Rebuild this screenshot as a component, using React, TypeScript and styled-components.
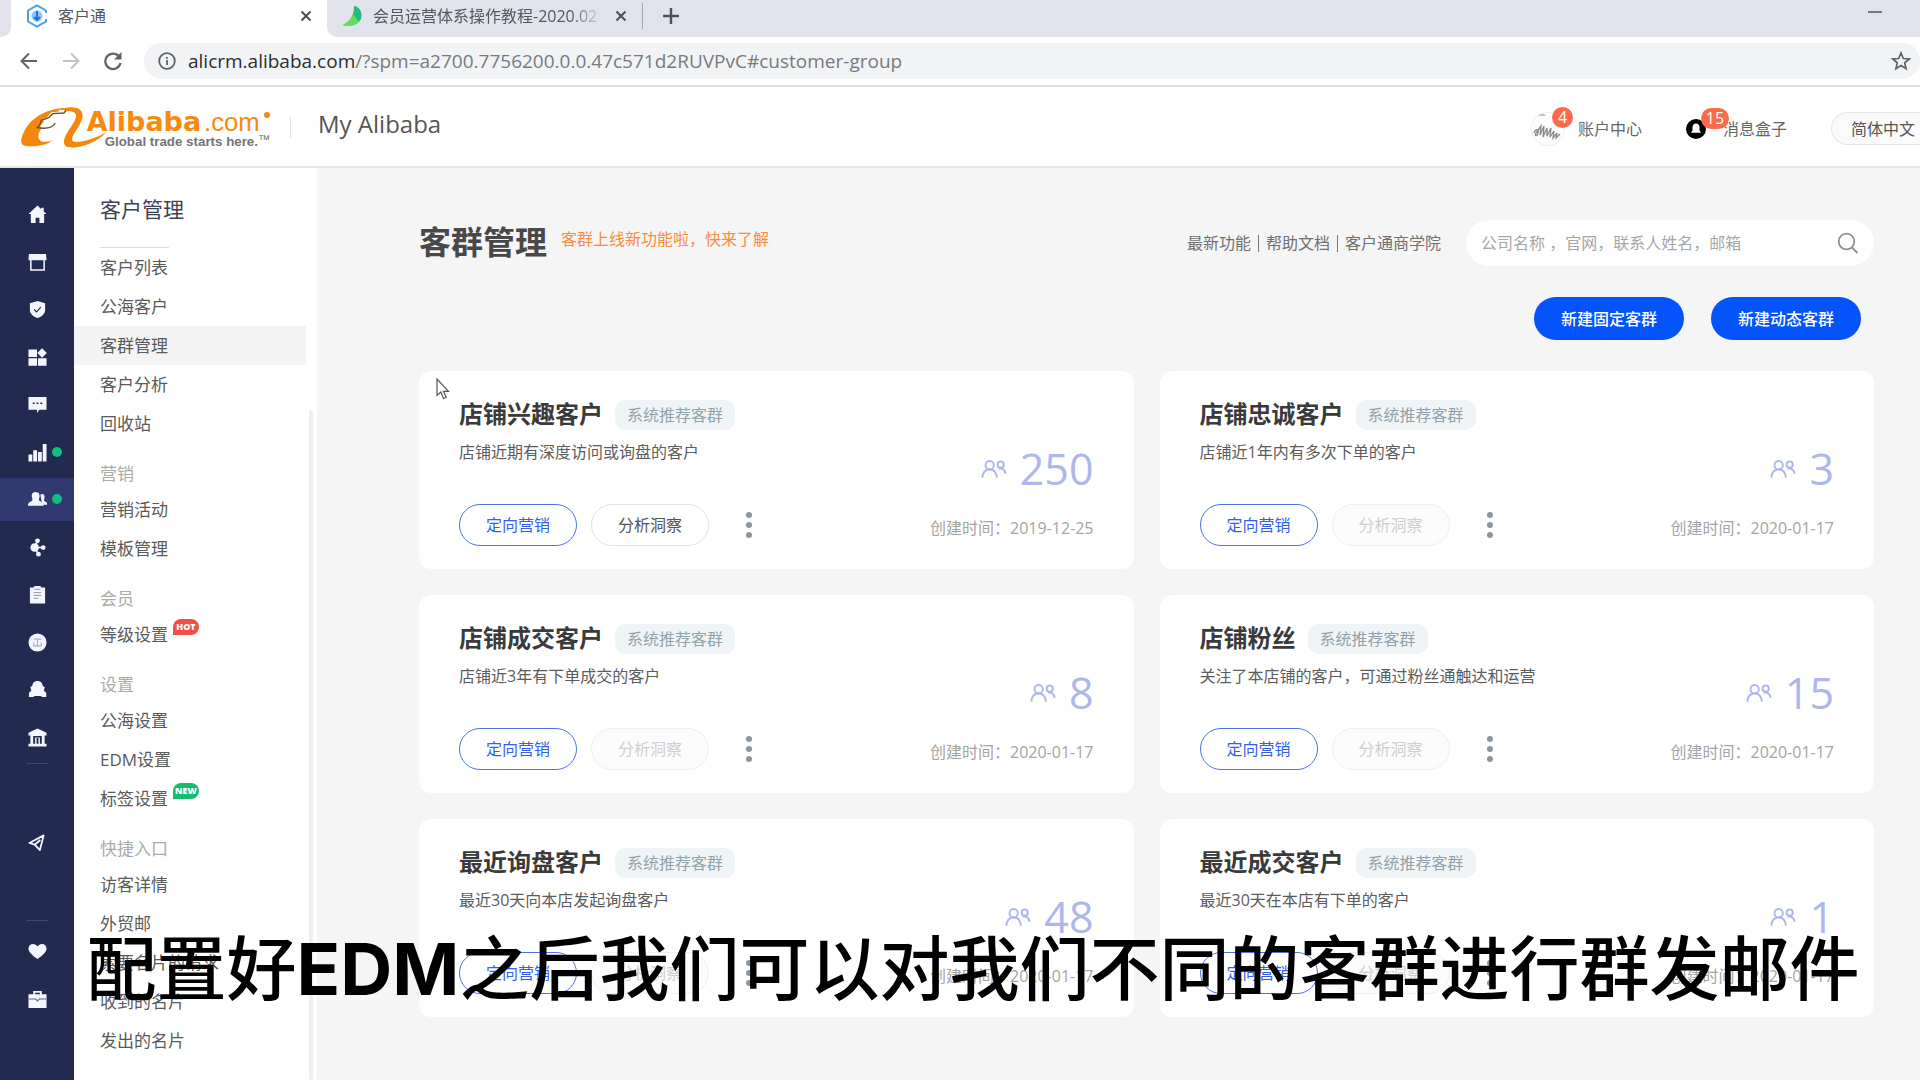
import React from "react";
import styled, { createGlobalStyle, css } from "styled-components";

const GlobalStyle = createGlobalStyle`
  *, *::before, *::after { box-sizing: border-box; }
  body {
    margin: 0;
    overflow: hidden;
    background: #f5f5f5;
    color: #555;
    font-family: "Open Sans", "Noto Sans CJK SC", sans-serif;
    font-size: 16px;
    line-height: 24px;
  }
  button, input, select { font: inherit; color: inherit; padding: 0; }
  button { cursor: pointer; }
  a { color: inherit; text-decoration: none; }
  svg { display: block; flex: none; }
  h1, h2, p, ul { margin: 0; padding: 0; }
  ul { list-style: none; }
`;

const Page = styled.div`
  display: flex;
  flex-direction: column;
  min-height: 100vh;
`;

/* ---------- browser ---------- */

const TabStrip = styled.div`
  display: flex;
  height: 37px;
  background: #fff;
`;

const PreviousTab = styled.div`
  flex: 0 0 11px;
  background: #e1e2eb;
  border-radius: 0 0 10px 0;
`;

const Tab = styled.div<{ $width: number; $gap: number }>`
  display: flex;
  align-items: center;
  gap: ${(p) => p.$gap}px;
  width: ${(p) => p.$width}px;
  padding: 0 12px 5px 14px;
`;

const InactiveTabs = styled.div`
  flex: 1;
  display: flex;
  align-items: center;
  background: #e1e2eb;
  border-radius: 0 0 0 10px;
`;

const TabTitle = styled.span<{ $fade?: boolean }>`
  flex: 1;
  min-width: 0;
  overflow: hidden;
  white-space: nowrap;
  color: #55575c;
  ${(p) =>
    p.$fade &&
    css`
      mask-image: linear-gradient(to right, #000 86%, transparent);
    `}
`;

const IconButton = styled.button`
  display: flex;
  align-items: center;
  justify-content: center;
  flex: none;
  width: 18px;
  height: 24px;
  border: 0;
  background: none;
`;

const TabDivider = styled.i`
  width: 1px;
  height: 26px;
  margin: 0 19px 5px 0;
  background: #a5a8b0;
`;

const NewTab = styled(IconButton)`
  margin-bottom: 5px;
`;

const Minimize = styled(IconButton)`
  margin: 0 36px 13px auto;
`;

const Toolbar = styled.div`
  display: flex;
  align-items: center;
  gap: 24px;
  height: 50px;
  padding-left: 20px;
  background: #fff;
  border-bottom: 2px solid #dcdee1;
`;

const AddressBar = styled.div`
  flex: 1;
  display: flex;
  align-items: center;
  gap: 12px;
  height: 36px;
  margin-left: -2px;
  padding: 0 10px 0 14px;
  border-radius: 18px;
  background: #f2f3f5;
`;

const Url = styled.span`
  flex: 1;
  font-size: 19px;
  color: #777a7f;
  b { font-weight: 400; color: #2b2d31; }
`;

/* ---------- site header ---------- */

const Header = styled.header`
  display: flex;
  align-items: center;
  height: 81px;
  padding-left: 20px;
  background: #fff;
  border-bottom: 2px solid #e2e5e9;
`;

const Brand = styled.a`
  display: flex;
  align-items: center;
`;

const HeaderDivider = styled.i`
  width: 1px;
  height: 22px;
  margin: 0 27px 0 17px;
  background: #e2e2e2;
`;

const SiteName = styled.span`
  font-size: 24px;
  line-height: 32px;
  margin-bottom: 6px;
  color: #555;
`;

const HeaderActions = styled.div`
  display: flex;
  align-items: center;
  gap: 44px;
  margin-left: auto;
  padding-top: 4px;
`;

const HeaderLink = styled.a<{ $gap: number }>`
  display: flex;
  align-items: center;
  gap: ${(p) => p.$gap}px;
  color: #666;
`;

const BadgeHolder = styled.span`
  position: relative;
  display: flex;
`;

const CountBadge = styled.b<{ $left: number; $top: number; $width: number }>`
  position: absolute;
  left: ${(p) => p.$left}px;
  top: ${(p) => p.$top}px;
  width: ${(p) => p.$width}px;
  height: 21px;
  border-radius: 11px;
  background: #fb6b4b;
  color: #fff;
  font-size: 16px;
  font-weight: 400;
  line-height: 21px;
  text-align: center;
`;

const Language = styled.select`
  appearance: none;
  width: 89px;
  height: 33px;
  padding-left: 19px;
  border: 1px solid #e4e4e4;
  border-right: 0;
  border-radius: 17px 0 0 17px;
  background: #fafafa;
  color: #555;
`;

/* ---------- navigation ---------- */

const Body = styled.div`
  flex: 1;
  display: flex;
  align-items: stretch;
`;

const Rail = styled.nav`
  flex: 0 0 74px;
  display: flex;
  flex-direction: column;
  align-items: center;
  padding-top: 25px;
  background: #222a50;
  color: #f4f6ff;
`;

const RailList = styled.ul`
  display: flex;
  flex-direction: column;
  justify-content: space-between;
  width: 100%;
  height: 566px;
`;

const RailLink = styled.a<{ $active?: boolean }>`
  position: relative;
  display: flex;
  align-items: center;
  justify-content: center;
  width: 100%;
  height: 43px;
  background: ${(p) => (p.$active ? "#303970" : "transparent")};
`;

const GreenDot = styled.i`
  position: absolute;
  right: 12px;
  top: 16px;
  width: 10px;
  height: 10px;
  border-radius: 50%;
  background: #10bf7c;
`;

const RailDivider = styled.i<{ $top: number; $bottom: number }>`
  width: 22px;
  height: 1px;
  margin: ${(p) => p.$top}px 0 ${(p) => p.$bottom}px;
  background: #3e4775;
`;

const RailGroup = styled.div`
  display: flex;
  flex-direction: column;
  gap: 5px;
  width: 100%;
`;

const SubMenu = styled.nav`
  flex: 0 0 243px;
  display: flex;
  gap: 3px;
  background: #fff;
`;

const SubMenuContent = styled.div`
  flex: 0 0 232px;
  padding: 23px 0 20px;
`;

const SubMenuTitle = styled.h2`
  padding-left: 26px;
  font-size: 21px;
  font-weight: 400;
  line-height: 36px;
  color: #3d3f52;
`;

const SubMenuRule = styled.div`
  width: 69px;
  height: 1px;
  margin: 20px 0 0 26px;
  background: #dcdcdc;
`;

const GroupLabel = styled.p`
  margin-top: 14px;
  padding-left: 26px;
  font-size: 17px;
  line-height: 33px;
  color: #aaa;
`;

const MenuLink = styled.a<{ $active?: boolean }>`
  display: flex;
  align-items: center;
  gap: 5px;
  height: 39px;
  padding-left: 26px;
  font-size: 17px;
  color: #5a5a5a;
  background: ${(p) => (p.$active ? "#f4f4f5" : "transparent")};
`;

const Flag = styled.em<{ $color: string }>`
  align-self: flex-start;
  margin-top: 4px;
  width: 26px;
  height: 16px;
  border-radius: 8px 8px 8px 0;
  background: ${(p) => p.$color};
  color: #fff;
  font-size: 9px;
  font-style: normal;
  font-weight: 800;
  line-height: 15px;
  text-align: center;
`;

const ScrollThumb = styled.div`
  width: 4px;
  margin-top: 242px;
  border-radius: 2px;
  background: #efefef;
`;

/* ---------- main ---------- */

const Main = styled.main`
  flex: 1;
  min-width: 0;
  padding: 52px 46px 20px 102px;
`;

const PageHead = styled.div`
  display: flex;
  align-items: center;
  height: 46px;
`;

const PageTitle = styled.h1`
  padding-bottom: 2px;
  font-size: 32px;
  font-weight: 700;
  line-height: 44px;
  color: #484848;
`;

const NewsLink = styled.a`
  margin-left: 14px;
  padding-bottom: 8px;
  color: #ff8a3c;
`;

const HelpLinks = styled.div`
  display: flex;
  align-items: center;
  margin-left: auto;
  color: #707070;
  a + a { margin-left: 7px; padding-left: 8px; background: linear-gradient(#777, #777) left center / 1px 17px no-repeat; }
`;

const SearchBox = styled.label`
  display: flex;
  align-items: center;
  width: 408px;
  height: 46px;
  margin-left: 25px;
  padding: 0 15px;
  border-radius: 23px;
  background: #fff;
  color: #909090;
`;

const SearchInput = styled.input`
  flex: 1;
  min-width: 0;
  border: 0;
  outline: 0;
  background: none;
  &::placeholder { color: #a6a6a6; opacity: 1; }
`;

const CreateRow = styled.div`
  display: flex;
  justify-content: flex-end;
  gap: 27px;
  margin: 31px 0;
  padding-right: 13px;
`;

const CreateButton = styled.button`
  width: 150px;
  height: 43px;
  border: 0;
  border-radius: 22px;
  background: #0453fb;
  color: #fff;
  font-weight: 500;
`;

const CardGrid = styled.div`
  display: grid;
  grid-template-columns: 1fr 1fr;
  gap: 26px;
`;

const Card = styled.article`
  display: flex;
  justify-content: space-between;
  padding: 25px 40px 23px;
  border-radius: 12px;
  background: #fff;
`;

const CardTitleRow = styled.div`
  display: flex;
  align-items: center;
  gap: 12px;
  height: 36px;
`;

const CardTitle = styled.h2`
  font-size: 24px;
  font-weight: 700;
  line-height: 36px;
  color: #3a3a3a;
`;

const Tag = styled.span`
  height: 30px;
  margin-top: 2px;
  padding: 0 12px;
  border-radius: 10px;
  background: #eff5f7;
  color: #94a2a8;
  line-height: 30px;
`;

const Description = styled.p`
  margin-top: 8px;
  color: #5c5c5c;
`;

const Actions = styled.div`
  display: flex;
  gap: 14px;
  margin-top: 40px;
`;

const PillButton = styled.button<{ $primary?: boolean }>`
  width: 118px;
  height: 42px;
  border: 1px solid ${(p) => (p.$primary ? "#4e73e0" : "#e2e2e2")};
  border-radius: 21px;
  background: #fff;
  color: ${(p) => (p.$primary ? "#3460ee" : "#555")};
  &:disabled {
    border-color: #efefef;
    background: #fcfcfc;
    color: #cfcfcf;
  }
`;

const MoreButton = styled(IconButton)`
  width: 52px;
  height: 42px;
  color: #8b96a3;
`;

const Stats = styled.div`
  display: flex;
  flex-direction: column;
  align-items: flex-end;
  justify-content: flex-end;
  gap: 25px;
  padding-bottom: 6px;
`;

const Count = styled.div`
  display: flex;
  align-items: center;
  gap: 13px;
  height: 44px;
  font-size: 43px;
  line-height: 44px;
  color: #afb6ee;
`;

const Created = styled.time`
  color: #a5a5a5;
`;

/* ---------- overlays ---------- */

const Pointer = styled.div`
  position: fixed;
  left: 436px;
  top: 378px;
`;

const Caption = styled.div`
  position: fixed;
  left: 0;
  right: 0;
  bottom: 65px;
  padding-left: 26px;
  color: #000;
  font-family: "Noto Sans CJK SC", sans-serif;
  font-size: 70px;
  font-weight: 500;
  line-height: 100px;
  text-align: center;
  white-space: nowrap;
  pointer-events: none;
  b { font-family: Inter, sans-serif; font-size: 72px; font-weight: 700; line-height: 72px; }
`;

/* ---------- icons ---------- */

type RailIconName = "home" | "store" | "shield" | "apps" | "chat" | "bars" | "people" | "hub" | "clip" | "coin" | "agent" | "bank" | "send" | "heart" | "case";

const railShapes: Record<RailIconName, React.ReactNode> = {
  home: <path d="M10 0.500 0.500 9.500h2.500V19h5v-5.500h4V19h5V9.500h2.500L16.500 6.600V3h-2.500v1.500z" />,
  store: <><path d="M1 1h18l.5 6.500H.5z" /><path d="M3 7v10.800h14V7" fill="none" stroke="currentColor" strokeWidth="1.600" /></>,
  shield: <><path d="M10 1 2 3.500v7c0 4 3.500 7 8 8.500 4.500-1.500 8-4.500 8-8.500v-7z" /><path d="m6.500 10 2.500 2.500 4.500-5" fill="none" stroke="#222a50" strokeWidth="1.200" /></>,
  apps: <><path d="M.5 1.500h9v8h-9zM.5 10.700h9v8h-9zM10.500 10.700h9v8h-9z" /><path d="m14.800 0.300 5 5-5 5-5-5z" /></>,
  chat: <><path d="M.5 2h19v13.500H12L9.500 19v-3.500h-9z" /><path d="M5 8h2v1.500H5zM9 8h2v1.500H9zM13 8h2v1.500h-2z" fill="#222a50" /></>,
  bars: <path d="M.5 12H4.500v7.500h-4zM5.500 7.500h4v12h-4zM10.500 9.500h4v10h-4zM15.500 1h4v18.500h-4z" />,
  people: <><path d="M13 5c2.800-2 5.300.3 4.300 3.800-.6 2-.6 2.700.7 3.400l2 1.300v2h-5z" /><path d="M8 2c3.600 0 5 3 3.900 6.200-.7 2-.5 2.900 1 3.700 2.300 1.200 3.600 2 3.600 4.600H0c0-2.600 1-3.400 3.400-4.600 1.500-.8 1.600-1.700.9-3.700C3.200 5 4.500 2 8 2z" /></>,
  hub: <><circle cx="7" cy="10" r="4.500" /><circle cx="10" cy="3" r="2.500" /><circle cx="16" cy="10" r="2.500" /><circle cx="11" cy="17" r="2.500" /><path d="m7 10 3-7M7 10h9M7 10l4 7" stroke="currentColor" strokeWidth="1.600" /></>,
  clip: <><path d="M2 2.500h4.500V1h7v1.500H18V19.500H2z" /><path d="M6 8h8M6 11h8M6 14h5M7 4.500h6" stroke="#222a50" strokeWidth="1" opacity=".5" /></>,
  coin: <><circle cx="10" cy="10" r="9.500" /><path d="M6 6.500h8M10 6.500v8M6 10v3.500h8V10" fill="none" stroke="#222a50" strokeWidth="1.200" opacity=".35" /></>,
  agent: <path d="M10 1c3.600 0 5.200 2.300 5.400 5l2.300 1.700-1 3.500 2.500 2.300V18h-4.300l-1.500-1.200h-6.500L5.500 18H1v-4.500l2.500-2.300-1-3.500L4.600 6C4.800 3.300 6.400 1 10 1z" />,
  bank: <path d="M10 .5.5 5v3h2v8.500h-2v3h19v-3h-2V8h2V5zM5.500 8.500h2v8h-2zM9 10.500h2v6H9zM12.500 8.500h2v8h-2zM7.500 8.500h5V10h-5z" fillRule="evenodd" />,
  send: <path d="M16.500 2.500 1.500 10.500l5.500 1.800L12.500 18z M7 12.300l6-5" fill="none" stroke="currentColor" strokeWidth="1.900" strokeLinejoin="round" />,
  heart: <path d="M10 18C4 13.500.5 10.500.5 6.800.5 4 2.500 2 5.200 2 7.200 2 9 3 10 4.800 11 3 12.800 2 14.800 2c2.700 0 4.700 2 4.700 4.800 0 3.700-3.500 6.700-9.500 11.200z" />,
  case: <><path d="M5.500 4.500V1h9v3.500h5v14.500H.5V4.500zm2 0h5V3h-5z" fillRule="evenodd" /><path d="M1 9.500h7l2 2 2-2h7" fill="none" stroke="#222a50" strokeWidth="1.200" opacity=".7" /></>,
};

const RailIcon = ({ name }: { name: RailIconName }) => (
  <svg width="19" height="19" viewBox="0 0 20 20" fill="currentColor">{railShapes[name]}</svg>
);

const CloseIcon = () => (
  <svg width="12" height="12" viewBox="0 0 12 12" stroke="#4c4f55" strokeWidth="2"><path d="m1.500 1.500 9 9m0-9-9 9" /></svg>
);

const PeopleOutline = () => (
  <svg width="26" height="20" viewBox="0 0 27 20" fill="none" stroke="currentColor" strokeWidth="2">
    <circle cx="9" cy="6" r="4.300" />
    <path d="M1.500 19c.3-5.500 3-8.500 7.500-8.500s7 3 7.500 8.500" />
    <circle cx="20.500" cy="5.500" r="3.200" />
    <path d="M18.500 9.800c4-1 6.500 1.300 7 5.200" />
  </svg>
);

const AlibabaLogo = () => (
  <svg width="253" height="44" viewBox="30 30 759 132" role="img" aria-label="Alibaba.com">
    <path d="M172 39C120 36 62 66 42 110c-16 34-10 44 20 44 24 0 50-4 66-18-20 6-32 6-38 0-10-10-4-28 8-38l-8-4 12-14-4-8 14-6 12-14 20-2 4-6 24 2z" fill="#f5870f" />
    <path d="M164 39c42-8 60 8 52 34-8 26-32 48-30 62 4 14 58 2 104-24-40 44-124 60-128 34-4-26 32-56 36-80 2-14-12-18-34-16z" fill="#f5870f" />
    <path d="M168 46l-6 8-34 2-12 12-22 8-4 12-10 12M84 98c24 4 44 0 52-14" fill="none" stroke="#5d5344" strokeWidth="4" />
    <g fill="#f8890f">
      <text x="230" y="107" fontFamily="DejaVu Sans, sans-serif" fontWeight="700" fontSize="81">Alibaba</text>
      <text x="582" y="107" fontFamily="Liberation Sans, sans-serif" fontSize="77">.com</text>
      <circle cx="771" cy="60" r="9" />
    </g>
    <g fill="#747474" fontFamily="Liberation Sans, sans-serif">
      <text x="284" y="152" fontWeight="700" fontSize="40">Global trade starts here.</text>
      <text x="744" y="146" fontSize="38">™</text>
    </g>
  </svg>
);

/* ---------- data ---------- */

const railItems: { name: RailIconName; label: string; dot?: boolean; active?: boolean }[] = [
  { name: "home", label: "首页" },
  { name: "store", label: "店铺" },
  { name: "shield", label: "保障" },
  { name: "apps", label: "应用" },
  { name: "chat", label: "消息" },
  { name: "bars", label: "数据", dot: true },
  { name: "people", label: "客户", dot: true, active: true },
  { name: "hub", label: "推广" },
  { name: "clip", label: "订单" },
  { name: "coin", label: "资金" },
  { name: "agent", label: "服务" },
  { name: "bank", label: "金融" },
];

type MenuItem = { text: string; active?: boolean; flag?: string; color?: string };

const menu: { label?: string; items: MenuItem[] }[] = [
  { items: [{ text: "客户列表" }, { text: "公海客户" }, { text: "客群管理", active: true }, { text: "客户分析" }, { text: "回收站" }] },
  { label: "营销", items: [{ text: "营销活动" }, { text: "模板管理" }] },
  { label: "会员", items: [{ text: "等级设置", flag: "HOT", color: "#f04f43" }] },
  { label: "设置", items: [{ text: "公海设置" }, { text: "EDM设置" }, { text: "标签设置", flag: "NEW", color: "#14bd6f" }] },
  { label: "快捷入口", items: [{ text: "访客详情" }, { text: "外贸邮" }, { text: "索要名片的请求" }, { text: "收到的名片" }, { text: "发出的名片" }] },
];

const groups = [
  { title: "店铺兴趣客户", text: "店铺近期有深度访问或询盘的客户", count: 250, date: "2019-12-25", insight: true },
  { title: "店铺忠诚客户", text: "店铺近1年内有多次下单的客户", count: 3, date: "2020-01-17" },
  { title: "店铺成交客户", text: "店铺近3年有下单成交的客户", count: 8, date: "2020-01-17" },
  { title: "店铺粉丝", text: "关注了本店铺的客户，可通过粉丝通触达和运营", count: 15, date: "2020-01-17" },
  { title: "最近询盘客户", text: "最近30天向本店发起询盘客户", count: 48, date: "2020-01-17" },
  { title: "最近成交客户", text: "最近30天在本店有下单的客户", count: 1, date: "2020-01-17" },
];

/* ---------- sections ---------- */

const Browser = () => (
  <>
    <TabStrip>
      <PreviousTab />
      <Tab $width={316} $gap={9}>
        <svg width="24" height="24" viewBox="0 0 24 24" fill="none" stroke="#4a9bea" strokeWidth="2">
          <path d="M21 15v2.500l-9 5-9-5v-11l9-5 9 5V9" />
          <circle cx="12" cy="12" r="5.500" fill="#8cc4fa" stroke="none" />
          <path d="M12 7v9M9 13l3 3 3-3" stroke="#1b72d8" />
        </svg>
        <TabTitle>客户通</TabTitle>
        <IconButton aria-label="关闭标签页"><CloseIcon /></IconButton>
      </Tab>
      <InactiveTabs>
        <Tab $width={315} $gap={9}>
          <svg width="23" height="22" viewBox="0 0 23 22">
            <path d="M13 1c6 1 9 7 7 13-3 6-10 8-18 6 7-3 11-9 11-19z" fill="#27b980" />
            <path d="M2 20c5-3 8-6 10-11l6 8c-4 4-10 5-16 3z" fill="#63dc5c" />
          </svg>
          <TabTitle $fade>会员运营体系操作教程-2020.02</TabTitle>
          <IconButton aria-label="关闭标签页"><CloseIcon /></IconButton>
        </Tab>
        <TabDivider />
        <NewTab aria-label="新建标签页">
          <svg width="16" height="16" viewBox="0 0 16 16" stroke="#4c4f55" strokeWidth="2.400"><path d="M8 0v16M0 8h16" /></svg>
        </NewTab>
        <Minimize aria-label="最小化">
          <svg width="14" height="2"><rect width="14" height="2" fill="#77787f" /></svg>
        </Minimize>
      </InactiveTabs>
    </TabStrip>
    <Toolbar>
      <IconButton aria-label="后退">
        <svg width="18" height="18" viewBox="0 0 18 18" fill="none" stroke="#5f6368" strokeWidth="2"><path d="M17 9H2M9 1.500 1.500 9 9 16.500" /></svg>
      </IconButton>
      <IconButton aria-label="前进">
        <svg width="18" height="18" viewBox="0 0 18 18" fill="none" stroke="#bfc1c5" strokeWidth="2"><path d="M1 9h15M9 1.500 16.500 9 9 16.500" /></svg>
      </IconButton>
      <IconButton aria-label="重新加载">
        <svg width="20" height="20" viewBox="0 0 20 20" fill="none" stroke="#5f6368" strokeWidth="2.200"><path d="M16 5.500A7.700 7.700 0 1 0 17.500 12" /><path d="M18.500 1v7.500H11z" fill="#5f6368" stroke="none" /></svg>
      </IconButton>
      <AddressBar>
        <svg width="18" height="18" viewBox="0 0 18 18" fill="none" stroke="#5f6368" strokeWidth="1.800"><circle cx="9" cy="9" r="7.800" /><path d="M9 8v5M9 5v1.800" /></svg>
        <Url role="textbox" aria-label="地址"><b>alicrm.alibaba.com</b>/?spm=a2700.7756200.0.0.47c571d2RUVPvC#customer-group</Url>
        <IconButton aria-label="收藏">
          <svg width="20" height="20" viewBox="0 0 20 20" fill="none" stroke="#5f6368" strokeWidth="1.700"><path d="m10 2 2.300 5.500 6 .5-4.600 3.900 1.400 5.800L10 14.600l-5.100 3.100 1.400-5.800L1.700 8l6-.5z" /></svg>
        </IconButton>
      </AddressBar>
    </Toolbar>
  </>
);

const SiteHeader = () => (
  <Header>
    <Brand href="#home"><AlibabaLogo /></Brand>
    <HeaderDivider />
    <SiteName>My Alibaba</SiteName>
    <HeaderActions>
      <HeaderLink href="#account" $gap={13}>
        <BadgeHolder>
          <svg width="34" height="34" viewBox="0 0 34 34" fill="none">
            <circle cx="17" cy="17" r="16.500" fill="#fdfdfd" stroke="#f0f0f0" />
            <path d="M7 4c2-3 7-3 8 0z" fill="#a9cfe0" />
            <path d="M3 21c2-5 5-4 4 0s-4 3-2 0l5-7-1 9 4-9-1 11 4-9v8l4-8-1 9 4-6-1 7 4-5-1 5 4-4" stroke="#888" strokeWidth="1.300" />
          </svg>
          <CountBadge $left={21} $top={-5} $width={21}>4</CountBadge>
        </BadgeHolder>
        账户中心
      </HeaderLink>
      <HeaderLink href="#messages" $gap={17}>
        <BadgeHolder>
          <svg width="20" height="20" viewBox="0 0 20 20">
            <circle cx="10" cy="10" r="10" fill="#000" />
            <path d="M10 4.500c2.500 0 3.500 1.700 3.500 4v3l1.500 2.300H5l1.500-2.300v-3c0-2.300 1-4 3.500-4z" fill="#fff" />
          </svg>
          <CountBadge $left={15} $top={-11} $width={28}>15</CountBadge>
        </BadgeHolder>
        消息盒子
      </HeaderLink>
      <Language aria-label="语言"><option>简体中文</option></Language>
    </HeaderActions>
  </Header>
);

const SideNavigation = () => (
  <>
    <Rail>
      <RailList>
        {railItems.map((item) => (
          <li key={item.name}>
            <RailLink href={`#${item.name}`} aria-label={item.label} $active={item.active}>
              <RailIcon name={item.name} />
              {item.dot && <GreenDot />}
            </RailLink>
          </li>
        ))}
      </RailList>
      <RailDivider $top={4} $bottom={57} />
      <RailLink href="#send" aria-label="发送"><RailIcon name="send" /></RailLink>
      <RailDivider $top={56} $bottom={9} />
      <RailGroup>
        <RailLink href="#heart" aria-label="收藏"><RailIcon name="heart" /></RailLink>
        <RailLink href="#case" aria-label="工具"><RailIcon name="case" /></RailLink>
      </RailGroup>
    </Rail>
    <SubMenu>
      <SubMenuContent>
        <SubMenuTitle>客户管理</SubMenuTitle>
        <SubMenuRule />
        {menu.map((group, i) => (
          <React.Fragment key={i}>
            {group.label && <GroupLabel>{group.label}</GroupLabel>}
            <ul>
              {group.items.map((item) => (
                <li key={item.text}>
                  <MenuLink href="#menu" $active={item.active}>
                    {item.text}
                    {item.flag && <Flag $color={item.color!}>{item.flag}</Flag>}
                  </MenuLink>
                </li>
              ))}
            </ul>
          </React.Fragment>
        ))}
      </SubMenuContent>
      <ScrollThumb />
    </SubMenu>
  </>
);

const GroupCard = ({ group }: { group: (typeof groups)[number] }) => (
  <Card>
    <div>
      <CardTitleRow>
        <CardTitle>{group.title}</CardTitle>
        <Tag>系统推荐客群</Tag>
      </CardTitleRow>
      <Description>{group.text}</Description>
      <Actions>
        <PillButton $primary>定向营销</PillButton>
        <PillButton disabled={!group.insight}>分析洞察</PillButton>
        <MoreButton aria-label="更多">
          <svg width="8" height="28" viewBox="0 0 8 28" fill="currentColor"><circle cx="4" cy="4" r="3" /><circle cx="4" cy="14" r="3" /><circle cx="4" cy="24" r="3" /></svg>
        </MoreButton>
      </Actions>
    </div>
    <Stats>
      <Count><PeopleOutline />{group.count}</Count>
      <Created>创建时间：{group.date}</Created>
    </Stats>
  </Card>
);

export default function App() {
  return (
    <Page>
      <GlobalStyle />
      <Browser />
      <SiteHeader />
      <Body>
        <SideNavigation />
        <Main>
          <PageHead>
            <PageTitle>客群管理</PageTitle>
            <NewsLink href="#news">客群上线新功能啦，快来了解</NewsLink>
            <HelpLinks>
              <a href="#new">最新功能</a>
              <a href="#docs">帮助文档</a>
              <a href="#school">客户通商学院</a>
            </HelpLinks>
            <SearchBox>
              <SearchInput aria-label="搜索客户" placeholder="公司名称 ，官网，联系人姓名，邮箱" />
              <svg width="22" height="22" viewBox="0 0 22 22" fill="none" stroke="currentColor" strokeWidth="1.800"><circle cx="9.500" cy="9.500" r="7.800" /><path d="m15 15.500 5.500 5.500" /></svg>
            </SearchBox>
          </PageHead>
          <CreateRow>
            <CreateButton>新建固定客群</CreateButton>
            <CreateButton>新建动态客群</CreateButton>
          </CreateRow>
          <CardGrid>
            {groups.map((group) => (
              <GroupCard key={group.title} group={group} />
            ))}
          </CardGrid>
        </Main>
      </Body>
      <Pointer>
        <svg width="14" height="22" viewBox="0 0 14 22" fill="#fff" stroke="#555" strokeWidth="1.200"><path d="M1 1v16.500l3.800-3.500 2.700 6.500 2.700-1.200-2.700-6h5z" /></svg>
      </Pointer>
      <Caption>配置好<b>EDM</b>之后我们可以对我们不同的客群进行群发邮件</Caption>
    </Page>
  );
}
